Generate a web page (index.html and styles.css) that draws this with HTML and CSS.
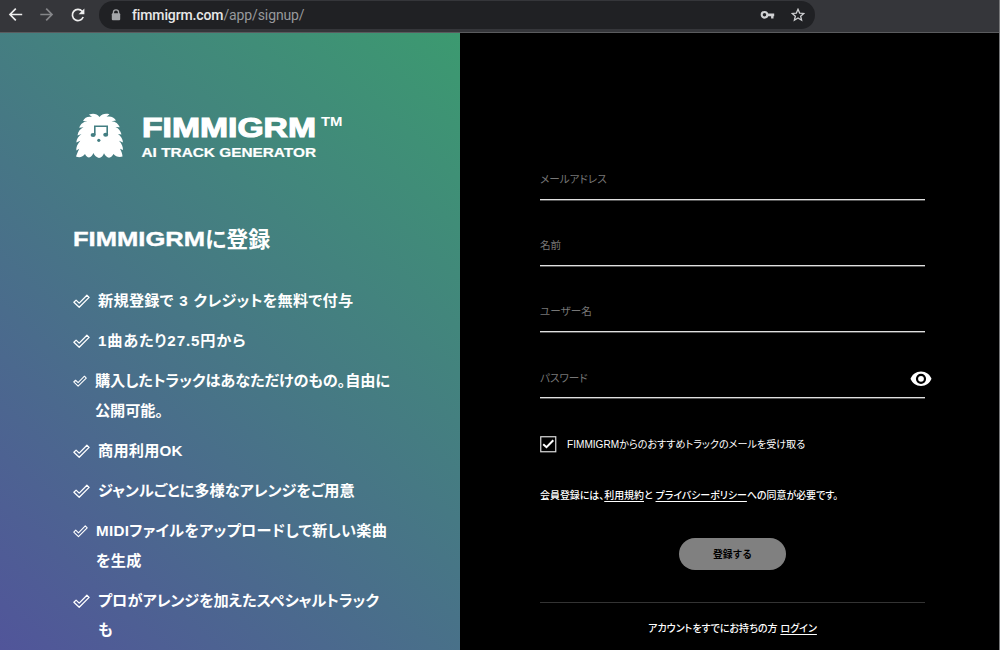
FILE: index.html
```html
<!DOCTYPE html>
<html lang="ja">
<head>
<meta charset="utf-8">
<title>FIMMIGRM</title>
<link rel="stylesheet" href="styles.css">
</head>
<body>
<svg width="0" height="0" class="defs"><defs>
<symbol id="check" viewBox="0 0 17 14"><path d="M.9 8.2 3.100 6.100 6.200 9.100 13.900 1.200 16.100 3.400 6.200 13.300Z" fill="none" stroke="currentColor" stroke-width="1.300" stroke-linejoin="round"/></symbol>
</defs></svg>
<header class="browser">
  <div class="nav">
    <svg width="16" height="16" viewBox="0 0 16 16"><path d="M14.200 7.500H2.500M7.800 1.700 2 7.500l5.800 5.800" /></svg>
    <svg class="dim" width="16" height="16" viewBox="0 0 16 16"><path d="M1.300 7.500h11.200M7.200 1.700 13 7.500l-5.800 5.800" /></svg>
    <svg width="16" height="16" viewBox="0 0 16 16"><path d="M13.200 10A5.600 5.600 0 1 1 12.200 4.200l1.200 1.300" /><path class="solid" d="M14.400 1.400v5.800H8.600Z"/></svg>
  </div>
  <div class="address">
    <svg class="lock" width="10" height="12" viewBox="0 0 10 12"><path d="M2.400 5V3.400a2.600 2.600 0 0 1 5.200 0V5" fill="none" stroke="#a4a6a9" stroke-width="1.300"/><rect x=".8" y="4.300" width="8.400" height="7" rx="1" fill="#a4a6a9"/></svg>
    <div class="url">fimmigrm.com<span>/app/signup/</span></div>
    <svg class="key" width="15" height="10" viewBox="0 0 15 10"><path d="M7 3.400h7.200v2.800h-.7v2.200h-2.400V6.200H7" fill="#d0d1d3"/><circle cx="4.500" cy="4.800" r="2.800" fill="none" stroke="#d0d1d3" stroke-width="2.100"/></svg>
    <svg class="star" width="14" height="14" viewBox="0 0 14 14"><path d="m7 1.300 1.650 3.800 4.100.350-3.100 2.700.950 4.050L7 10.050 3.400 12.200l.950-4.050-3.100-2.700 4.100-.350Z" fill="none" stroke="#d0d1d3" stroke-width="1.300"/></svg>
  </div>
</header>
<main class="page">
  <section class="promo">
    <div class="brand">
      <svg class="mascot" width="48" height="46" viewBox="0 0 48 46">
        <path fill="#fff" d="M23.500 4C21 .5 17 .2 13 1.500l3 2.500C12 3 8.500 4.500 7 8l4.500.3C7.500 8.500 4.500 11 3.200 14.800l4.300-.6C4 16 2 18.500 1.500 22.500L5.500 21C2.500 23 .5 26 .3 29.500l4-1.700C1.500 31 0 34 .3 37.500l3-1.700C1.500 39 1 41.500 0 43.500c3.500 1.500 7 .5 9-2.500 1 2 2.500 3.500 4 3.500 2-.5 3.500-2 4.300-4.500 1.200 2.500 3.200 4.500 5.700 5 2.300-.5 4.200-2 5-4.800 1.200 2.500 3 4.300 5 4.500 2-.5 3.500-1.700 4.500-3.700 2 2.500 5.500 3.500 9 2.500-.2-3-1-5-2.500-7.700l3 1.200c0-3-1-6-4-9.200l4 1.700c-.3-3.500-2-6.500-5-8.500l3.500.5C44.500 18 43 15.500 39.500 14l4.300.2c-1.500-3.500-4-5.700-8.300-6L40 7.500c-2-3.500-5.500-4.500-9.500-3.700l3-2.500c-4-1-7.500-.5-10 2.700Z"/>
        <g fill="#437e82"><path d="M18 12.500h14v8.800h-1.600v-7.300H19.600v8H18Z"/><ellipse cx="17.100" cy="22" rx="2.500" ry="2"/><ellipse cx="29.700" cy="21.700" rx="2.500" ry="2"/><circle cx="22.800" cy="27.300" r="1.600"/></g>
      </svg>
      <svg class="wordmark" width="204" height="46" viewBox="0 0 204 46">
        <text class="logo" x="0" y="24" textLength="174" lengthAdjust="spacingAndGlyphs">FIMMIGRM</text>
        <text class="tm" x="179" y="13" textLength="21.500" lengthAdjust="spacingAndGlyphs">TM</text>
        <text class="tagline" x="-.5" y="43.500" textLength="174.500" lengthAdjust="spacingAndGlyphs">AI TRACK GENERATOR</text>
      </svg>
    </div>
    <h1><svg width="132" height="24" viewBox="0 0 132 24"><text class="heading-latin" x="0" y="19.500" textLength="132" lengthAdjust="spacingAndGlyphs">FIMMIGRM</text></svg><span>に登録</span></h1>
    <ul class="benefits">
      <li><svg><use href="#check"/></svg><p class="credits">新規登録で 3 クレジットを無料で付与</p></li>
      <li><svg><use href="#check"/></svg><p class="price">1曲あたり27.5円から</p></li>
      <li class="tight"><svg><use href="#check"/></svg><p class="rights">購入したトラックはあなただけのもの。自由に<br>公開可能。</p></li>
      <li><svg><use href="#check"/></svg><p class="commercial">商用利用OK</p></li>
      <li><svg><use href="#check"/></svg><p>ジャンルごとに多様なアレンジをご用意</p></li>
      <li class="snug"><svg><use href="#check"/></svg><p class="midi">MIDIファイルをアップロードして新しい楽曲<br>を生成</p></li>
      <li><svg><use href="#check"/></svg><p class="special">プロがアレンジを加えたスペシャルトラック<br>も</p></li>
    </ul>
  </section>
  <section class="signup">
    <div class="field"><span>メールアドレス</span></div>
    <div class="field"><span>名前</span></div>
    <div class="field"><span>ユーザー名</span></div>
    <div class="field"><span>パスワード</span>
      <svg class="eye" width="22" height="16" viewBox="0 0 22 16"><path d="M11 .5C6 .5 2.300 3.500.5 7.800 2.300 12.200 6 15 11 15s8.700-2.800 10.500-7.200C19.700 3.500 16 .5 11 .5Z" fill="#fff"/><circle cx="11" cy="7.800" r="4" fill="#fff" stroke="#000" stroke-width="2.200"/></svg>
    </div>
    <div class="optin">
      <svg width="17" height="17" viewBox="0 0 17 17"><rect x=".75" y=".75" width="15" height="15" fill="none" stroke="#ddd" stroke-width="1.200"/><path d="m3.200 8.200 3.300 3L13.300 4.200" fill="none" stroke="#fff" stroke-width="2"/></svg>
      <span>FIMMIGRMからのおすすめトラックのメールを受け取る</span>
    </div>
    <p class="terms">会員登録には、<u>利用規約</u>と <u>プライバシーポリシー</u>への同意が必要です。</p>
    <button class="submit">登録する</button>
    <p class="login"><span>アカウントをすでにお持ちの方 <u>ログイン</u></span></p>
  </section>
</main>
</body>
</html>
```

FILE: styles.css
```css
* { box-sizing: border-box; }
body {
  margin: 0;
  width: 1000px;
  height: 650px;
  overflow: hidden;
  display: flex;
  flex-direction: column;
  background: #000;
  border-right: 1px solid #77787a;
  color: #fff;
  font-family: "Liberation Sans", "Noto Sans CJK JP", sans-serif;
  font-feature-settings: "palt";
}
svg { display: block; flex: none; }
.defs { position: absolute; }
p, h1, ul { margin: 0; padding: 0; }
.browser {
  flex: none;
  height: 33px;
  background: #35363a;
  border-bottom: 1px solid #5a5b5e;
  display: flex;
  align-items: flex-start;
}
.nav { display: flex; gap: 15px; padding: 7px 0 0 8px; width: 99px; }
.nav svg { fill: none; stroke: #eee; stroke-width: 1.7; }
.nav .dim { stroke: #858689; }
.nav .solid { fill: #eee; stroke: none; }
.address {
  margin-top: 1px;
  width: 716px;
  height: 28px;
  border-radius: 14px;
  background: #202124;
  display: flex;
  align-items: center;
  padding: 0 10px 0 12px;
}
.url {
  flex: 1;
  margin-left: 11px;
  font: 500 14px/20px Roboto, sans-serif;
  letter-spacing: -.12px;
  color: #e8e8e8;
}
.url span { color: #97999c; font-weight: 400; }
.star { margin-left: 16px; }
.page { flex: 1; min-height: 0; display: flex; }
.promo {
  width: 460px;
  flex: none;
  padding: 80px 0 0 73px;
  background: linear-gradient(42deg, #51559a 0%, #3c9a70 100%);
}
.brand { display: flex; gap: 18px; padding-left: 3px; height: 46px; }
.wordmark { overflow: visible; }
.wordmark text { fill: #fff; font-family: "Liberation Sans", sans-serif; font-weight: 700; }
.wordmark .logo { font-size: 27px; stroke: #fff; stroke-width: 1.1; }
.wordmark .tm { font-size: 12px; }
.wordmark .tagline { font-size: 12.500px; stroke: #fff; stroke-width: .2; }
h1 {
  margin-top: 64px;
  height: 30px;
  display: flex;
  align-items: center;
  font-size: 22px;
  line-height: 30px;
  font-weight: 700;
}
h1 span { font-family: "Noto Sans CJK JP", sans-serif; line-height: 30px; position: relative; top: -1px; }
.heading-latin { fill: #fff; stroke: #fff; stroke-width: .4; font: 700 21px "Liberation Sans", sans-serif; }
.benefits {
  margin-top: 33px;
  list-style: none;
  display: flex;
  flex-direction: column;
  gap: 10.200px;
  font-size: 15.200px;
  line-height: 29.800px;
  font-weight: 700;
}
.benefits li { display: flex; gap: 8px; white-space: nowrap; }
.benefits svg { width: 17px; height: 14px; margin-top: 8px; }
.benefits .tight svg { width: 14px; }
.benefits .snug svg { width: 15px; }
.credits { letter-spacing: .25px; word-spacing: 1px; }
.price { letter-spacing: .85px; }
.rights { letter-spacing: -.1px; }
.commercial { letter-spacing: .2px; }
.midi { letter-spacing: .27px; }
.special { letter-spacing: -.08px; }
.signup { flex: 1; padding: 133px 74px 0 80px; }
.field {
  height: 66.200px;
  position: relative;
  padding-top: 2px;
  font-size: 10.600px;
  line-height: 22px;
  color: #777;
}
.field::before {
  content: "";
  display: block;
  position: absolute;
  left: 0;
  right: 0;
  top: 32.500px;
  border-top: 1px solid #e0e0e0;
  border-bottom: 1px solid #555;
}
.eye { position: absolute; right: -7px; top: 6px; }
.optin {
  margin-top: 5px;
  height: 17px;
  display: flex;
  align-items: center;
  gap: 10px;
  font-size: 10.100px;
  line-height: 17px;
  white-space: nowrap;
}
.terms { margin-top: 33px; font-size: 9.950px; line-height: 20px; white-space: nowrap; font-weight: 500; }
.submit {
  display: block;
  width: 107px;
  height: 32px;
  margin: 32px auto 0;
  padding: 0;
  border: 0;
  border-radius: 16px;
  background: #808080;
  color: #000;
  font: 700 9.800px/32px "Noto Sans CJK JP", sans-serif;
}
.login {
  margin-top: 32px;
  border-top: 1px solid #333;
  padding-top: 16px;
  text-align: center;
  font-size: 10px;
  line-height: 20px;
  white-space: nowrap;
  font-weight: 500;
}
u { text-underline-offset: 2px; }
```
